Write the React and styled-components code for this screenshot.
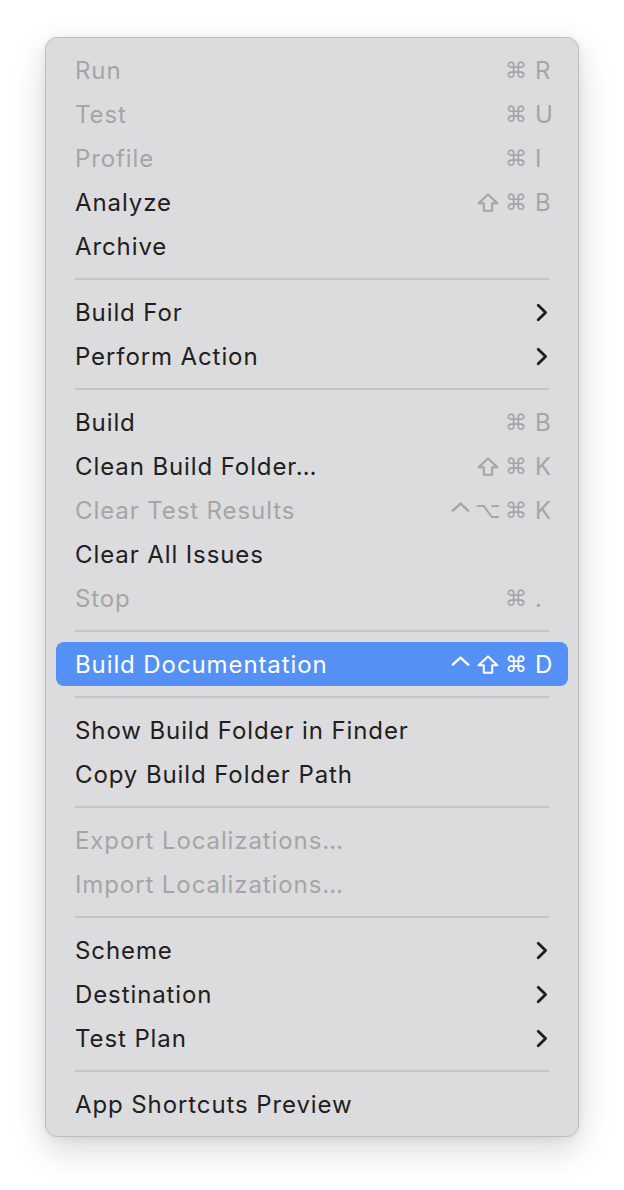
import styled, { createGlobalStyle } from 'styled-components';

const GlobalStyle = createGlobalStyle`
  html, body {
    margin: 0;
    padding: 0;
    background: #ffffff;
  }
  * {
    box-sizing: border-box;
  }
`

const menu = [
  [
    { label: 'Run', mods: ['cmd'], keyName: 'R', disabled: true },
    { label: 'Test', mods: ['cmd'], keyName: 'U', disabled: true },
    { label: 'Profile', mods: ['cmd'], keyName: 'I', disabled: true },
    { label: 'Analyze', mods: ['shift', 'cmd'], keyName: 'B' },
    { label: 'Archive' },
  ],
  [
    { label: 'Build For', submenu: true },
    { label: 'Perform Action', submenu: true },
  ],
  [
    { label: 'Build', mods: ['cmd'], keyName: 'B' },
    { label: 'Clean Build Folder…', mods: ['shift', 'cmd'], keyName: 'K' },
    { label: 'Clear Test Results', mods: ['ctrl', 'opt', 'cmd'], keyName: 'K', disabled: true },
    { label: 'Clear All Issues' },
    { label: 'Stop', mods: ['cmd'], keyName: '.', disabled: true },
  ],
  [
    { label: 'Build Documentation', mods: ['ctrl', 'shift', 'cmd'], keyName: 'D', active: true },
  ],
  [
    { label: 'Show Build Folder in Finder' },
    { label: 'Copy Build Folder Path' },
  ],
  [
    { label: 'Export Localizations…', disabled: true },
    { label: 'Import Localizations…', disabled: true },
  ],
  [
    { label: 'Scheme', submenu: true },
    { label: 'Destination', submenu: true },
    { label: 'Test Plan', submenu: true },
  ],
  [
    { label: 'App Shortcuts Preview' },
  ],
]

const Page = styled.div`
  padding: 37px 45px 53px 45px;
`

const Panel = styled.div`
  width: 534px;
  padding: 10px;
  background: #dcdcde;
  border: 1px solid #bdbdbf;
  border-radius: 12px;
  box-shadow: 0 12px 34px rgba(0, 0, 0, 0.16), 0 2px 8px rgba(0, 0, 0, 0.06);
  display: flex;
  flex-direction: column;
`

const Row = styled.div`
  height: 44px;
  display: flex;
  align-items: center;
  justify-content: space-between;
  padding: 1px 18px 0 19px;
  border-radius: 8px;
  font-family: Inter, 'Noto Sans', sans-serif;
  font-size: 24px;
  background: ${props => props.active ? '#5591f5' : 'transparent'};
  color: ${props => props.active ? '#ffffff' : props.disabled ? '#a5a5a7' : '#202020'};
`

const Label = styled.span`
  white-space: nowrap;
  letter-spacing: 0.9px;
`

const Shortcut = styled.div`
  display: flex;
  align-items: center;
  height: 100%;
  color: ${props => props.active ? '#ffffff' : '#a5a5a7'};
`

const Mod = styled.span`
  width: 28px;
  display: flex;
  align-items: center;
  justify-content: center;
  font-family: 'DejaVu Sans', sans-serif;
  font-size: 22px;
`

const Key = styled.span`
  width: 15px;
  margin-left: 5px;
  text-align: left;
  white-space: nowrap;
`

const Separator = styled.div`
  height: 2px;
  margin: 10px 19px;
  background: #c6c6c8;
`

const Glyph = styled.svg`
  display: block;
  width: ${props => props.w}px;
  height: 19px;
`

const Chevron = styled.svg`
  width: 12px;
  height: 19px;
  margin-right: 2px;
`

function Arrow() {
  return (
    <Chevron viewBox="0 0 12 19" fill="none">
      <path d="M2.2 2.2 L9.6 9.5 L2.2 16.8" stroke="#1e1e1e" strokeWidth="2.8" strokeLinecap="round" strokeLinejoin="round" />
    </Chevron>
  )
}

function ModGlyph({ name }) {
  if (name === 'shift') {
    return (
      <Glyph w={22} viewBox="0 0 22 19" fill="none">
        <path d="M11 1.4 L20.4 10.2 L15.2 10.2 L15.2 17.8 L6.8 17.8 L6.8 10.2 L1.6 10.2 Z" stroke="currentColor" strokeWidth="2" strokeLinejoin="round" />
      </Glyph>
    )
  }
  if (name === 'ctrl') {
    return (
      <Glyph w={19} viewBox="0 0 19 19" fill="none">
        <path d="M1.8 9.6 L9.5 2.6 L17.2 9.6" stroke="currentColor" strokeWidth="2.4" strokeLinecap="round" strokeLinejoin="round" />
      </Glyph>
    )
  }
  return <span>{name === 'opt' ? '⌥' : '⌘'}</span>
}

function Item({ item }) {
  return (
    <Row active={item.active} disabled={item.disabled}>
      <Label>{item.label}</Label>
      {item.submenu && <Arrow />}
      {item.keyName && (
        <Shortcut active={item.active}>
          {item.mods.map(m => (
            <Mod key={m}><ModGlyph name={m} /></Mod>
          ))}
          <Key>{item.keyName}</Key>
        </Shortcut>
      )}
    </Row>
  )
}

export default function App() {
  return (
    <Page>
      <GlobalStyle />
      <Panel>
        {menu.map((group, gi) => (
          <div key={gi}>
            {gi > 0 && <Separator />}
            {group.map(item => <Item key={item.label} item={item} />)}
          </div>
        ))}
      </Panel>
    </Page>
  )
}
